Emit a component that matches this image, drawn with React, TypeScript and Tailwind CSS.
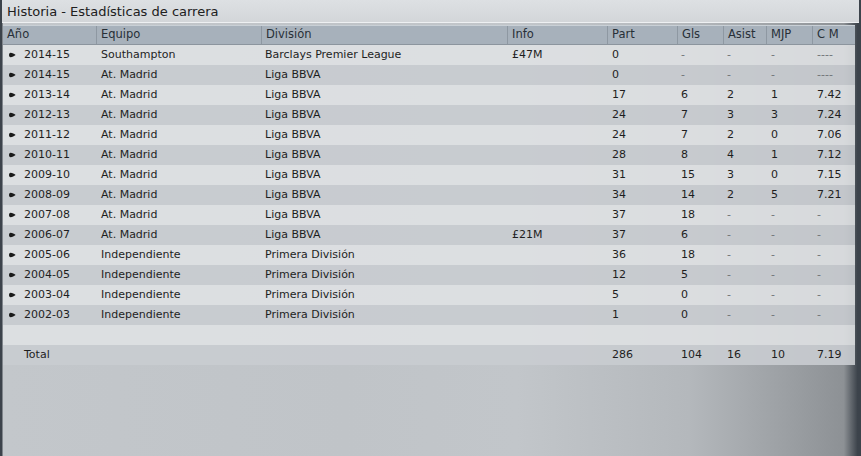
import React from "react";

type Row = {
  y: string; team: string; div: string; info: string; part: string; gls: string; asist: string; mjp: string; cm: string;
};

const rows: Row[] = [
  { y: "2014-15", team: "Southampton", div: "Barclays Premier League", info: "£47M", part: "0", gls: "-", asist: "-", mjp: "-", cm: "----" },
  { y: "2014-15", team: "At. Madrid", div: "Liga BBVA", info: "", part: "0", gls: "-", asist: "-", mjp: "-", cm: "----" },
  { y: "2013-14", team: "At. Madrid", div: "Liga BBVA", info: "", part: "17", gls: "6", asist: "2", mjp: "1", cm: "7.42" },
  { y: "2012-13", team: "At. Madrid", div: "Liga BBVA", info: "", part: "24", gls: "7", asist: "3", mjp: "3", cm: "7.24" },
  { y: "2011-12", team: "At. Madrid", div: "Liga BBVA", info: "", part: "24", gls: "7", asist: "2", mjp: "0", cm: "7.06" },
  { y: "2010-11", team: "At. Madrid", div: "Liga BBVA", info: "", part: "28", gls: "8", asist: "4", mjp: "1", cm: "7.12" },
  { y: "2009-10", team: "At. Madrid", div: "Liga BBVA", info: "", part: "31", gls: "15", asist: "3", mjp: "0", cm: "7.15" },
  { y: "2008-09", team: "At. Madrid", div: "Liga BBVA", info: "", part: "34", gls: "14", asist: "2", mjp: "5", cm: "7.21" },
  { y: "2007-08", team: "At. Madrid", div: "Liga BBVA", info: "", part: "37", gls: "18", asist: "-", mjp: "-", cm: "-" },
  { y: "2006-07", team: "At. Madrid", div: "Liga BBVA", info: "£21M", part: "37", gls: "6", asist: "-", mjp: "-", cm: "-" },
  { y: "2005-06", team: "Independiente", div: "Primera División", info: "", part: "36", gls: "18", asist: "-", mjp: "-", cm: "-" },
  { y: "2004-05", team: "Independiente", div: "Primera División", info: "", part: "12", gls: "5", asist: "-", mjp: "-", cm: "-" },
  { y: "2003-04", team: "Independiente", div: "Primera División", info: "", part: "5", gls: "0", asist: "-", mjp: "-", cm: "-" },
  { y: "2002-03", team: "Independiente", div: "Primera División", info: "", part: "1", gls: "0", asist: "-", mjp: "-", cm: "-" },
];

const cols = "grid grid-cols-[93px_165px_246px_100px_70px_46px_43px_46px_43px]";

function Bullet() {
  return (
    <svg width="8" height="6" viewBox="0 0 8 6" className="shrink-0">
      <path d="M2.5 0.8 C4.5 0.8 6 1.8 7.6 3 C6 4.2 4.5 5.2 2.5 5.2 C0.5 5.2 0.5 0.8 2.5 0.8 Z" fill="#1a1a1a" />
    </svg>
  );
}

function Dash({ v }: { v: string }) {
  if (v === "-" || v === "----") return <span className="text-[#6f7377]">{v}</span>;
  return <span>{v}</span>;
}

export default function App() {
  return (
    <div
      className="w-[861px] h-[456px] overflow-hidden flex flex-col text-[#1e1e1e] bg-[linear-gradient(90deg,#3c434b_0px,#3c434b_2px,#c3c7cb_3px,#c0c4c8_40%,#c2c6ca_60%,#b4b8bc_80%,#8d9195_98%,#3c434b_99.6%)]"
      style={{ fontFamily: '"DejaVu Sans", sans-serif' }}
    >
      <div className="h-[23px] flex items-center pl-[5px] pt-[1px] text-[13px] text-[#202020] bg-[linear-gradient(180deg,#dde0e3,#d3d6d9)] border-b border-[#eef0f2] mx-[2px]">
        Historia - Estadísticas de carrera
      </div>
      <div className="h-[2px]" />
      <div className="ml-[3px] w-[852px] flex flex-col text-[11px]">
        <div className={`${cols} h-[20px] bg-[#a7b1bb] border-t border-[#c9d0d6] border-b border-b-[#8c959e] text-[#283038]`}>
          {["Año", "Equipo", "División", "Info", "Part", "Gls", "Asist", "MJP", "C M"].map((h, i) => (
            <div key={h} className={`flex items-center pl-[4px] text-[11.5px] ${i > 0 ? "border-l border-[#8e98a2]" : ""}`}>
              {h}
            </div>
          ))}
        </div>
        {rows.map((r, i) => (
          <div key={i} className={`${cols} h-[20px] items-center ${i % 2 === 0 ? "bg-[#dfe1e3]/90" : "bg-[#c9ccd0]/90"}`}>
            <div className="flex items-center gap-[8px] pl-[5px]"><Bullet /><span>{r.y}</span></div>
            <div className="pl-[5px]">{r.team}</div>
            <div className="pl-[4px]">{r.div}</div>
            <div className="pl-[5px]">{r.info}</div>
            <div className="pl-[5px]">{r.part}</div>
            <div className="pl-[4px]"><Dash v={r.gls} /></div>
            <div className="pl-[4px]"><Dash v={r.asist} /></div>
            <div className="pl-[5px]"><Dash v={r.mjp} /></div>
            <div className="pl-[5px]"><Dash v={r.cm} /></div>
          </div>
        ))}
        <div className="h-[20px] bg-[#dfe1e3]/90" />
        <div className={`${cols} h-[20px] items-center bg-[#c9ccd0]/90`}>
          <div className="pl-[21px]">Total</div>
          <div />
          <div />
          <div />
          <div className="pl-[5px]">286</div>
          <div className="pl-[4px]">104</div>
          <div className="pl-[4px]">16</div>
          <div className="pl-[5px]">10</div>
          <div className="pl-[5px]">7.19</div>
        </div>
      </div>
    </div>
  );
}
